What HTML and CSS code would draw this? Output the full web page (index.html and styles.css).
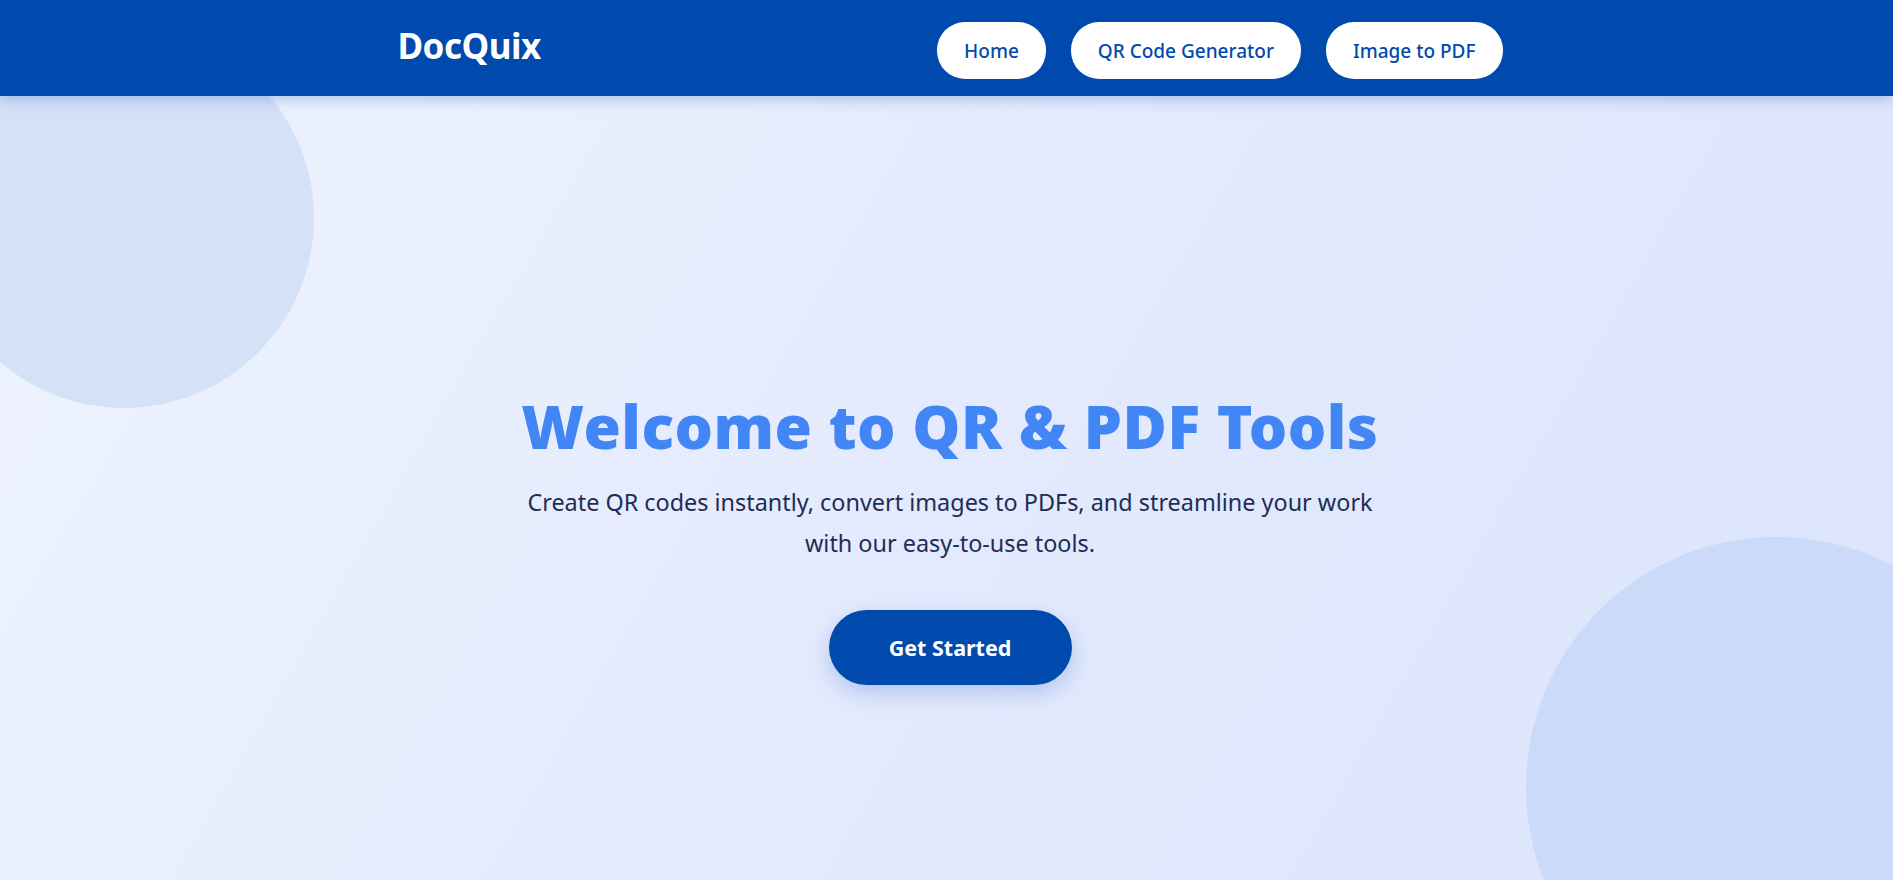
FILE: index.html
```html
<!DOCTYPE html>
<html lang="en">
<head>
<meta charset="utf-8">
<title>DocQuix</title>
<link rel="stylesheet" href="styles.css">
</head>
<body>
<header class="site-header">
  <div class="header-inner">
    <a class="logo" href="#">DocQuix</a>
    <nav class="nav">
      <a class="nav-btn" href="#">Home</a>
      <a class="nav-btn" href="#">QR Code Generator</a>
      <a class="nav-btn" href="#">Image to PDF</a>
    </nav>
  </div>
</header>
<main class="hero">
  <div class="blob blob-tl"></div>
  <div class="blob blob-br"></div>
  <div class="hero-content">
    <h1 class="hero-title">Welcome to QR &amp; PDF Tools</h1>
    <p class="hero-text">Create QR codes instantly, convert images to PDFs, and streamline your work with our easy-to-use tools.</p>
    <a class="cta" href="#">Get Started</a>
  </div>
</main>
</body>
</html>
```
FILE: styles.css
```css
* { box-sizing: border-box; }
html, body { margin: 0; padding: 0; }
body {
  font-family: "Noto Sans", "Open Sans", sans-serif;
  overflow: hidden;
  height: 100vh;
  background: #e6edfd;
}
a { text-decoration: none; }

.site-header {
  position: relative;
  z-index: 5;
  height: 96px;
  background: #004aad;
  box-shadow: 0 4px 12px rgba(0, 74, 173, 0.25);
}
.header-inner {
  width: 1112px;
  height: 100%;
  margin: 0 auto;
  padding-left: 7px;
  display: flex;
  align-items: center;
  justify-content: space-between;
}
.logo {
  color: #fff;
  font-weight: 700;
  font-size: 35px;
  letter-spacing: -0.5px;
  margin-top: -6px;
}
.nav {
  display: flex;
  gap: 25px;
  margin-top: 5px;
}
.nav-btn {
  height: 57px;
  display: flex;
  align-items: center;
  padding: 0 27px;
  background: #fff;
  color: #004aad;
  border-radius: 28px;
  font-size: 19px;
  font-weight: 500;
}

.hero {
  position: relative;
  overflow: hidden;
  height: calc(100vh - 96px);
  padding-top: 96px;
  padding-left: 7px;
  display: flex;
  align-items: center;
  justify-content: center;
  background: linear-gradient(120deg, #eef3fe 0%, #e3eafd 50%, #dbe4fc 100%);
}
.blob {
  position: absolute;
  border-radius: 50%;
}
.blob-tl {
  width: 380px;
  height: 380px;
  left: -66px;
  top: -68px;
  background: #d4e1f7;
}
.blob-br {
  width: 500px;
  height: 500px;
  left: 1526px;
  top: 441px;
  background: #cbdaf8;
}
.hero-content {
  position: relative;
  z-index: 1;
  text-align: center;
  display: flex;
  flex-direction: column;
  align-items: center;
}
.hero-title {
  margin: 0;
  color: #4285f4;
  font-size: 60.5px;
  font-weight: 900;
  line-height: 1.3;
  letter-spacing: 0.5px;
}
.hero-text {
  margin: 16px 0 0;
  width: 880px;
  color: #1f2d55;
  font-size: 23.4px;
  line-height: 41px;
}
.cta {
  margin-top: 46px;
  width: 243px;
  height: 75px;
  display: flex;
  align-items: center;
  justify-content: center;
  background: #004aad;
  color: #fff;
  border-radius: 38px;
  font-size: 21.5px;
  font-weight: 700;
  box-shadow: 0 8px 22px rgba(0, 74, 173, 0.22);
}
```
